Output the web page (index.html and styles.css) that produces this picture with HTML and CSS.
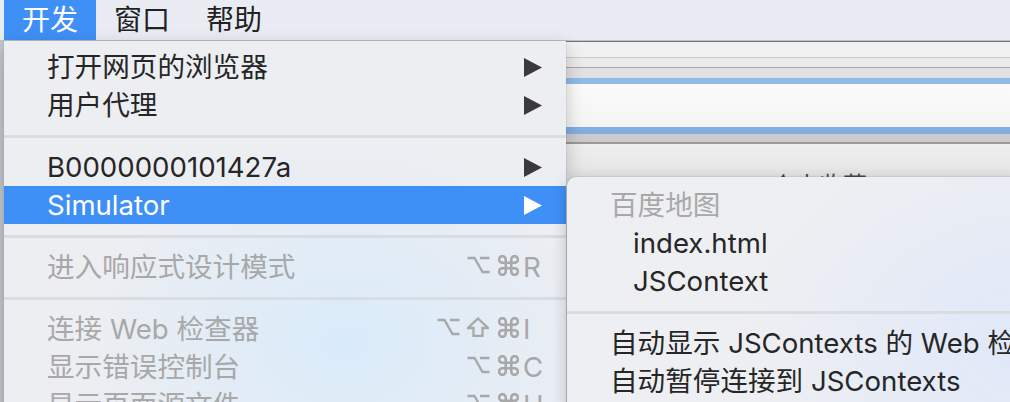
FILE: index.html
```html
<!DOCTYPE html>
<html lang="zh-CN">
<head>
<meta charset="utf-8">
<title>开发菜单</title>
<link rel="stylesheet" href="styles.css">
</head>
<body>
<div class="screen">
  <header class="menubar">
    <span class="mb-item active">开发</span>
    <span class="mb-item">窗口</span>
    <span class="mb-item">帮助</span>
  </header>
  <div class="desktop">
    <div class="strip"></div>
    <div class="window">
      <div class="w-edge"></div>
      <div class="w-title"></div>
      <div class="w-tabs"></div>
      <div class="w-bar1"></div>
      <div class="w-blue1"></div>
      <div class="w-field"></div>
      <div class="w-blue2"></div>
      <div class="w-bar2"></div>
      <div class="w-line"></div>
      <div class="w-content"><span class="fav">个人收藏</span></div>
    </div>

    <div class="menu main-menu">
      <div class="item"><span class="label">打开网页的浏览器</span><svg class="arrow" width="18" height="19" viewBox="0 0 18 19"><path d="M0 0L18 9.5L0 19Z"/></svg></div>
      <div class="item"><span class="label">用户代理</span><svg class="arrow" width="18" height="19" viewBox="0 0 18 19"><path d="M0 0L18 9.5L0 19Z"/></svg></div>
      <div class="sep"></div>
      <div class="item"><span class="label">B0000000101427a</span><svg class="arrow" width="18" height="19" viewBox="0 0 18 19"><path d="M0 0L18 9.5L0 19Z"/></svg></div>
      <div class="item selected"><span class="label">Simulator</span><svg class="arrow" width="18" height="19" viewBox="0 0 18 19"><path d="M0 0L18 9.5L0 19Z"/></svg></div>
      <div class="sep"></div>
      <div class="item disabled"><span class="label">进入响应式设计模式</span>
        <span class="sc">
          <span class="mod"><svg class="ico" width="23" height="20" viewBox="0 0 23 20"><path d="M0.5 3H7.5L15.5 17H22.5M13 3H22.5"/></svg></span>
          <span class="mod"><svg class="ico" width="21" height="21" viewBox="2 2 19 19"><path d="M9 9V6A3 3 0 1 0 6 9H17A3 3 0 1 0 14 6V17A3 3 0 1 0 17 14H6A3 3 0 1 0 9 17Z"/></svg></span>
          <span class="key">R</span>
        </span>
      </div>
      <div class="sep"></div>
      <div class="item disabled"><span class="label">连接 Web 检查器</span>
        <span class="sc">
          <span class="mod"><svg class="ico" width="23" height="20" viewBox="0 0 23 20"><path d="M0.5 3H7.5L15.5 17H22.5M13 3H22.5"/></svg></span>
          <span class="mod"><svg class="ico" width="22" height="20" viewBox="0 0 22 20"><path d="M11 1.5L21 11H15.5V19H6.5V11H1Z"/></svg></span>
          <span class="mod"><svg class="ico" width="21" height="21" viewBox="2 2 19 19"><path d="M9 9V6A3 3 0 1 0 6 9H17A3 3 0 1 0 14 6V17A3 3 0 1 0 17 14H6A3 3 0 1 0 9 17Z"/></svg></span>
          <span class="key">I</span>
        </span>
      </div>
      <div class="item disabled"><span class="label">显示错误控制台</span>
        <span class="sc">
          <span class="mod"><svg class="ico" width="23" height="20" viewBox="0 0 23 20"><path d="M0.5 3H7.5L15.5 17H22.5M13 3H22.5"/></svg></span>
          <span class="mod"><svg class="ico" width="21" height="21" viewBox="2 2 19 19"><path d="M9 9V6A3 3 0 1 0 6 9H17A3 3 0 1 0 14 6V17A3 3 0 1 0 17 14H6A3 3 0 1 0 9 17Z"/></svg></span>
          <span class="key">C</span>
        </span>
      </div>
      <div class="item disabled"><span class="label">显示页面源文件</span>
        <span class="sc">
          <span class="mod"><svg class="ico" width="23" height="20" viewBox="0 0 23 20"><path d="M0.5 3H7.5L15.5 17H22.5M13 3H22.5"/></svg></span>
          <span class="mod"><svg class="ico" width="21" height="21" viewBox="2 2 19 19"><path d="M9 9V6A3 3 0 1 0 6 9H17A3 3 0 1 0 14 6V17A3 3 0 1 0 17 14H6A3 3 0 1 0 9 17Z"/></svg></span>
          <span class="key">U</span>
        </span>
      </div>
    </div>

    <div class="menu submenu">
      <div class="item disabled"><span class="label">百度地图</span></div>
      <div class="item indent"><span class="label">index.html</span></div>
      <div class="item indent"><span class="label">JSContext</span></div>
      <div class="sep"></div>
      <div class="item"><span class="label">自动显示 JSContexts 的 Web 检查器</span></div>
      <div class="item"><span class="label">自动暂停连接到 JSContexts</span></div>
    </div>
  </div>
</div>
</body>
</html>
```

FILE: styles.css
```css
html, body {
  margin: 0;
  padding: 0;
}

body {
  width: 1010px;
  height: 402px;
  overflow: hidden;
  background: #e9edf3;
}

.screen {
  width: 1010px;
  height: 402px;
  overflow: hidden;
  display: flex;
  flex-direction: column;
}

/* ---------- menu bar ---------- */
.menubar {
  height: 40px;
  flex: none;
  display: flex;
  align-items: stretch;
  padding-left: 4px;
  background: #e9edf3;
  border-bottom: 1px solid #bfc2c7;
  font-family: Inter, "Noto Sans CJK SC", sans-serif;
  font-size: 28px;
  line-height: 40px;
  color: #222222;
}

.mb-item {
  padding: 0 18px;
  white-space: nowrap;
}

.mb-item.active {
  background: #3f90f6;
  color: #ffffff;
}

/* ---------- desktop / window behind ---------- */
.desktop {
  position: relative;
  flex: 1;
  display: flex;
}

.strip {
  width: 4px;
  flex: none;
  background: #c4c8cd;
}

.window {
  flex: 1;
  display: flex;
  flex-direction: column;
}

.w-edge { height: 1px; background: #6b7683; }
.w-title { height: 15px; background: #f1f1f1; border-bottom: 1px solid #cbcbcb; }
.w-tabs { height: 9px; background: #ebebeb; border-bottom: 1px solid #a9a9a9; }
.w-bar1 { height: 10px; background: #e2e0e3; }
.w-blue1 { height: 6px; background: #8fbbea; }
.w-field { height: 43px; background: linear-gradient(#fbfbfb, #f4f4f4); }
.w-blue2 { height: 7px; background: #84aee0; }
.w-bar2 { height: 8px; background: #cdcacd; }
.w-line { height: 2px; background: #9a9a9a; }

.w-content {
  flex: 1;
  background: linear-gradient(#eeeeee, #e3e3e3 40px, #e3e3e3);
  padding: 28px 0 0 767px;
  font-family: "Noto Sans CJK SC", sans-serif;
  font-size: 24px;
  line-height: 24px;
  color: #4a4a4a;
}

/* ---------- menus ---------- */
.menu {
  position: absolute;
  font-family: Inter, "Noto Sans CJK SC", sans-serif;
  font-size: 27.6px;
  color: #262626;
  box-sizing: border-box;
}

.main-menu {
  left: 4px;
  top: 0;
  width: 562px;
  height: 420px;
  padding-top: 7px;
  background:
    radial-gradient(ellipse 260px 200px at 340px 300px, rgba(214, 234, 251, 0.85), rgba(214, 234, 251, 0)),
    #eceef2;
  box-shadow: 0 6px 18px rgba(0, 0, 0, 0.22), 0 0 0 1px rgba(0, 0, 0, 0.04);
}

.submenu {
  left: 567px;
  top: 136px;
  width: 520px;
  height: 300px;
  padding-top: 9px;
  border-top-left-radius: 9px;
  background:
    radial-gradient(ellipse 300px 220px at 470px 170px, rgba(221, 231, 250, 0.9), rgba(221, 231, 250, 0)),
    #eeeff2;
  box-shadow: 0 4px 16px rgba(0, 0, 0, 0.22), 0 0 0 1px rgba(0, 0, 0, 0.06);
}

.item {
  height: 38px;
  line-height: 38px;
  display: flex;
  align-items: center;
  padding: 0 24px 0 43px;
  white-space: nowrap;
}

.item.indent {
  padding-left: 66px;
}

.label {
  flex: 1;
}

.arrow {
  flex: none;
  fill: #3a3a3a;
}

.item.selected {
  background: #3f90f6;
  color: #ffffff;
}

.item.selected .arrow {
  fill: #ffffff;
}

.item.disabled {
  color: #a8a8a8;
}

.sc {
  display: flex;
  flex: none;
  align-items: center;
  height: 38px;
}

.mod {
  width: 30px;
  height: 38px;
  display: flex;
  align-items: center;
  justify-content: center;
}

.ico {
  display: block;
  margin-bottom: 4px;
  fill: none;
  stroke: currentColor;
  stroke-width: 2.3;
  stroke-linejoin: miter;
}

.key {
  width: 19px;
  text-align: left;
}

.sep {
  height: 24px;
  display: flex;
  align-items: center;
}

.sep::before {
  content: "";
  display: block;
  width: 100%;
  height: 3px;
  background: #d9dce1;
}
```
